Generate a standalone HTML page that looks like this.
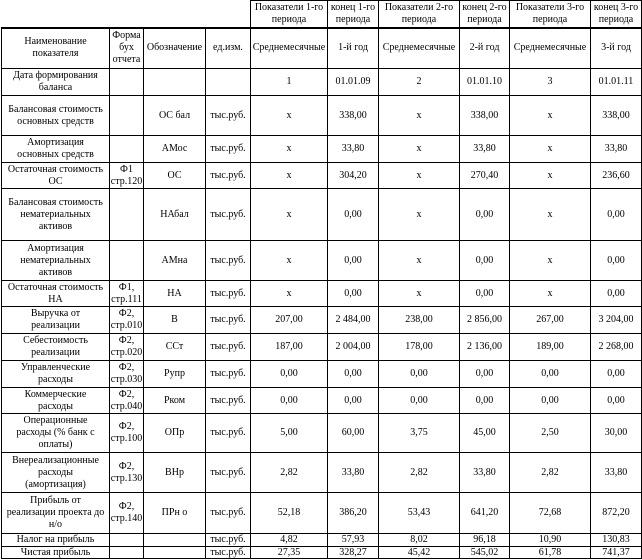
<!DOCTYPE html>
<html><head><meta charset="utf-8"><style>
html,body{margin:0;padding:0;background:#fff;width:642px;height:560px;overflow:hidden}
table{border-collapse:collapse;table-layout:fixed;position:absolute;left:1px;top:0;font-family:"Liberation Serif","DejaVu Serif",serif;font-size:10px;line-height:12px;color:#000}
td{border:1px solid #000;text-align:center;vertical-align:middle;padding:0;overflow:hidden;white-space:nowrap}
tr.top td{border-bottom:2px solid #000}
tr.top td.e{border:none;border-bottom:2px solid #000}
tr.s td{line-height:10px}
</style></head><body>
<table>
<colgroup><col style="width:108px"><col style="width:34px"><col style="width:62px"><col style="width:45px"><col style="width:77px"><col style="width:51px"><col style="width:81px"><col style="width:50px"><col style="width:81px"><col style="width:51px"></colgroup>
<tr class="top" style="height:27px"><td class="e"></td><td class="e"></td><td class="e"></td><td class="e" style="border-right:1px solid #000"></td><td>Показатели 1-го<br>периода</td><td>конец 1-го<br>периода</td><td>Показатели 2-го<br>периода</td><td>конец 2-го<br>периода</td><td>Показатели 3-го<br>периода</td><td>конец 3-го<br>периода</td></tr>
<tr style="height:41px"><td>Наименование<br>показателя</td><td>Форма<br>бух<br>отчета</td><td>Обозначение</td><td>ед.изм.</td><td>Среднемесячные</td><td>1-й год</td><td>Среднемесячные</td><td>2-й год</td><td>Среднемесячные</td><td>3-й год</td></tr>
<tr style="height:27px"><td>Дата формирования<br>баланса</td><td></td><td></td><td></td><td>1</td><td>01.01.09</td><td>2</td><td>01.01.10</td><td>3</td><td>01.01.11</td></tr>
<tr style="height:40px"><td>Балансовая стоимость<br>основных средств</td><td></td><td>ОС бал</td><td>тыс.руб.</td><td>x</td><td>338,00</td><td>x</td><td>338,00</td><td>x</td><td>338,00</td></tr>
<tr style="height:27px"><td>Амортизация<br>основных средств</td><td></td><td>АМос</td><td>тыс.руб.</td><td>x</td><td>33,80</td><td>x</td><td>33,80</td><td>x</td><td>33,80</td></tr>
<tr style="height:26px"><td>Остаточная стоимость<br>ОС</td><td>Ф1<br>стр.120</td><td>ОС</td><td>тыс.руб.</td><td>x</td><td>304,20</td><td>x</td><td>270,40</td><td>x</td><td>236,60</td></tr>
<tr style="height:52px"><td>Балансовая стоимость<br>нематериальных<br>активов</td><td></td><td>НАбал</td><td>тыс.руб.</td><td>x</td><td>0,00</td><td>x</td><td>0,00</td><td>x</td><td>0,00</td></tr>
<tr style="height:40px"><td>Амортизация<br>нематериальных<br>активов</td><td></td><td>АМна</td><td>тыс.руб.</td><td>x</td><td>0,00</td><td>x</td><td>0,00</td><td>x</td><td>0,00</td></tr>
<tr style="height:26px"><td>Остаточная стоимость<br>НА</td><td>Ф1,<br>стр.111</td><td>НА</td><td>тыс.руб.</td><td>x</td><td>0,00</td><td>x</td><td>0,00</td><td>x</td><td>0,00</td></tr>
<tr style="height:27px"><td>Выручка от<br>реализации</td><td>Ф2,<br>стр.010</td><td>В</td><td>тыс.руб.</td><td>207,00</td><td>2 484,00</td><td>238,00</td><td>2 856,00</td><td>267,00</td><td>3 204,00</td></tr>
<tr style="height:27px"><td>Себестоимость<br>реализации</td><td>Ф2,<br>стр.020</td><td>ССт</td><td>тыс.руб.</td><td>187,00</td><td>2 004,00</td><td>178,00</td><td>2 136,00</td><td>189,00</td><td>2 268,00</td></tr>
<tr style="height:27px"><td>Управленческие<br>расходы</td><td>Ф2,<br>стр.030</td><td>Рупр</td><td>тыс.руб.</td><td>0,00</td><td>0,00</td><td>0,00</td><td>0,00</td><td>0,00</td><td>0,00</td></tr>
<tr style="height:26px"><td>Коммерческие<br>расходы</td><td>Ф2,<br>стр.040</td><td>Рком</td><td>тыс.руб.</td><td>0,00</td><td>0,00</td><td>0,00</td><td>0,00</td><td>0,00</td><td>0,00</td></tr>
<tr style="height:39px"><td>Операционные<br>расходы (% банк с<br>оплаты)</td><td>Ф2,<br>стр.100</td><td>ОПр</td><td>тыс.руб.</td><td>5,00</td><td>60,00</td><td>3,75</td><td>45,00</td><td>2,50</td><td>30,00</td></tr>
<tr style="height:40px"><td>Внереализационные<br>расходы<br>(амортизация)</td><td>Ф2,<br>стр.130</td><td>ВНр</td><td>тыс.руб.</td><td>2,82</td><td>33,80</td><td>2,82</td><td>33,80</td><td>2,82</td><td>33,80</td></tr>
<tr style="height:41px"><td>Прибыль от<br>реализации проекта до<br>н/о</td><td>Ф2,<br>стр.140</td><td>ПРн о</td><td>тыс.руб.</td><td>52,18</td><td>386,20</td><td>53,43</td><td>641,20</td><td>72,68</td><td>872,20</td></tr>
<tr class="s" style="height:13px"><td>Налог на прибыль</td><td></td><td></td><td>тыс.руб.</td><td>4,82</td><td>57,93</td><td>8,02</td><td>96,18</td><td>10,90</td><td>130,83</td></tr>
<tr class="s" style="height:12px"><td>Чистая прибыль</td><td></td><td></td><td>тыс.руб.</td><td>27,35</td><td>328,27</td><td>45,42</td><td>545,02</td><td>61,78</td><td>741,37</td></tr>
</table>
</body></html>
